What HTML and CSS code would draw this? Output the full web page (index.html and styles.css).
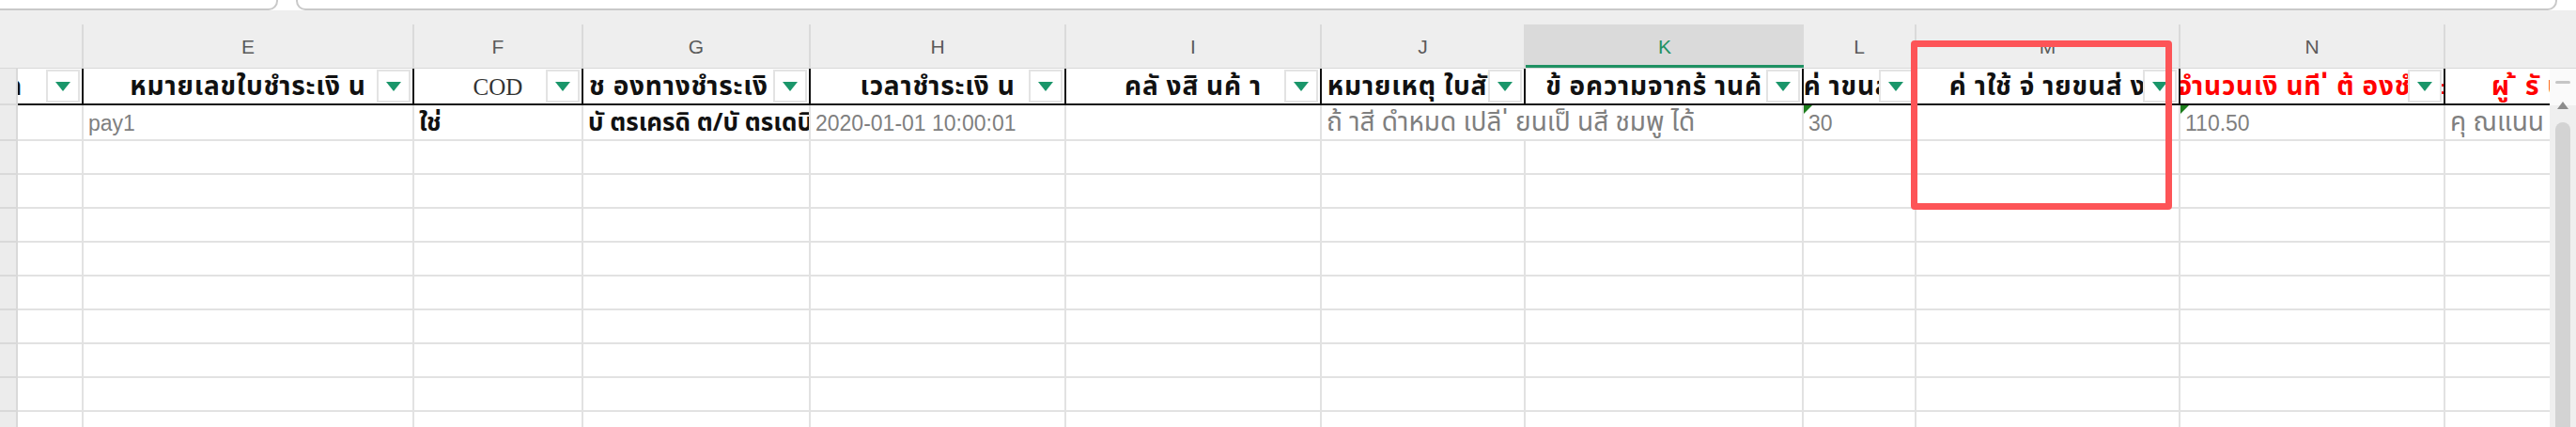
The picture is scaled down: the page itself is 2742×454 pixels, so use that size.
FILE: index.html
```html
<!DOCTYPE html>
<html lang="th">
<head>
<meta charset="utf-8">
<title>Sheet</title>
<link rel="stylesheet" href="styles.css">
</head>
<body>
<div class="topbar">
  <div class="field field-a"></div>
  <div class="field field-b"></div>
</div>

<div class="colbar">
  <div class="lt lt-corner"></div>
  <div class="lt"></div>
  <div class="lt">E</div>
  <div class="lt">F</div>
  <div class="lt">G</div>
  <div class="lt">H</div>
  <div class="lt">I</div>
  <div class="lt">J</div>
  <div class="lt lt-sel">K</div>
  <div class="lt">L</div>
  <div class="lt">M</div>
  <div class="lt">N</div>
  <div class="lt lt-last"></div>
  <div class="lt lt-scroll"></div>
</div>

<div class="body">
  <div class="table">
    <div class="hrow">
      <div class="rh"></div>
      <div class="hc hc-d"><span class="ht">ก</span><span class="dd"></span></div>
      <div class="hc"><span class="ht">หมายเลขใบชำระเงิ น</span><span class="dd"></span></div>
      <div class="hc"><span class="ht ht-serif">COD</span><span class="dd"></span></div>
      <div class="hc hc-left"><span class="ht">ช องทางชำระเงิ น</span><span class="dd"></span></div>
      <div class="hc"><span class="ht">เวลาชำระเงิ น</span><span class="dd"></span></div>
      <div class="hc"><span class="ht">คลั งสิ นค้ า</span><span class="dd"></span></div>
      <div class="hc"><span class="ht">หมายเหตุ ใบสั ่ ง</span><span class="dd"></span></div>
      <div class="hc"><span class="ht">ข้ อความจากร้ านค้ า</span><span class="dd"></span></div>
      <div class="hc"><span class="ht">ค่ าขนส่ ง</span><span class="dd"></span></div>
      <div class="hc"><span class="ht">ค่ าใช้ จ่ ายขนส่ ง</span><span class="dd"></span></div>
      <div class="hc hc-red"><span class="ht">จำนวนเงิ นที ่ ต้ องชำระ</span><span class="dd"></span></div>
      <div class="hc hc-red hc-o"><span class="ht">ผู ้ รั บ</span></div>
    </div>

    <div class="row row-first">
      <div class="rh"></div>
      <div class="c"></div>
      <div class="c">pay1</div>
      <div class="c c-th c-bold">ใช่</div>
      <div class="c c-th c-bold">บั ตรเครดิ ต/บั ตรเดบิ ต</div>
      <div class="c">2020-01-01 10:00:01</div>
      <div class="c"></div>
      <div class="c c-th c-span2">ถ้ าสี ดำหมด เปลี ่ ยนเป็ นสี ชมพู ได้</div>
      <div class="c c-flag">30</div>
      <div class="c"></div>
      <div class="c c-flag">110.50</div>
      <div class="c c-th c-last">คุ ณแนน</div>
    </div>

    <div class="row"><div class="rh"></div><div class="c"></div><div class="c"></div><div class="c"></div><div class="c"></div><div class="c"></div><div class="c"></div><div class="c"></div><div class="c"></div><div class="c"></div><div class="c"></div><div class="c"></div><div class="c c-last"></div></div>
    <div class="row"><div class="rh"></div><div class="c"></div><div class="c"></div><div class="c"></div><div class="c"></div><div class="c"></div><div class="c"></div><div class="c"></div><div class="c"></div><div class="c"></div><div class="c"></div><div class="c"></div><div class="c c-last"></div></div>
    <div class="row"><div class="rh"></div><div class="c"></div><div class="c"></div><div class="c"></div><div class="c"></div><div class="c"></div><div class="c"></div><div class="c"></div><div class="c"></div><div class="c"></div><div class="c"></div><div class="c"></div><div class="c c-last"></div></div>
    <div class="row"><div class="rh"></div><div class="c"></div><div class="c"></div><div class="c"></div><div class="c"></div><div class="c"></div><div class="c"></div><div class="c"></div><div class="c"></div><div class="c"></div><div class="c"></div><div class="c"></div><div class="c c-last"></div></div>
    <div class="row"><div class="rh"></div><div class="c"></div><div class="c"></div><div class="c"></div><div class="c"></div><div class="c"></div><div class="c"></div><div class="c"></div><div class="c"></div><div class="c"></div><div class="c"></div><div class="c"></div><div class="c c-last"></div></div>
    <div class="row"><div class="rh"></div><div class="c"></div><div class="c"></div><div class="c"></div><div class="c"></div><div class="c"></div><div class="c"></div><div class="c"></div><div class="c"></div><div class="c"></div><div class="c"></div><div class="c"></div><div class="c c-last"></div></div>
    <div class="row"><div class="rh"></div><div class="c"></div><div class="c"></div><div class="c"></div><div class="c"></div><div class="c"></div><div class="c"></div><div class="c"></div><div class="c"></div><div class="c"></div><div class="c"></div><div class="c"></div><div class="c c-last"></div></div>
    <div class="row"><div class="rh"></div><div class="c"></div><div class="c"></div><div class="c"></div><div class="c"></div><div class="c"></div><div class="c"></div><div class="c"></div><div class="c"></div><div class="c"></div><div class="c"></div><div class="c"></div><div class="c c-last"></div></div>
    <div class="row"><div class="rh"></div><div class="c"></div><div class="c"></div><div class="c"></div><div class="c"></div><div class="c"></div><div class="c"></div><div class="c"></div><div class="c"></div><div class="c"></div><div class="c"></div><div class="c"></div><div class="c c-last"></div></div>
  </div>

  <div class="vscroll">
    <div class="vs-top"><span class="grip"></span></div>
    <div class="vs-track">
      <span class="vs-arrow"></span>
      <span class="vs-thumb"></span>
    </div>
  </div>
</div>

<div class="callout"></div>
</body>
</html>
```

FILE: styles.css
```css
* { box-sizing: border-box; }

html, body {
  margin: 0;
  padding: 0;
}

body {
  width: 2742px;
  height: 454px;
  overflow: hidden;
  position: relative;
  background: #eeeeee;
  font-family: "Liberation Sans", Arial, "Noto Sans Thai", "Noto Sans Thai Looped", Tahoma, Loma, Garuda, sans-serif;
}

/* ---------- top input strip ---------- */
.topbar {
  height: 11px;
  display: flex;
  gap: 19px;
  background: #ffffff;
}

.field {
  height: 11px;
  background: #ffffff;
  border: 2px solid #c9c9c9;
  border-top: none;
  border-radius: 0 0 10px 10px;
}

.field-a {
  width: 316px;
  margin-left: -20px;
  flex: none;
}

.field-b {
  flex: 1;
  margin-right: 20px;
}

/* ---------- column letters ---------- */
.colbar {
  display: grid;
  grid-template-columns: 19px 70px 352px 180px 242px 272px 272px 217px 296px 120px 281px 282px 111px 28px;
  padding-top: 15px;
  height: 62px;
  border-bottom: 1px solid #d8d8d8;
  background: #eeeeee;
}

.lt {
  display: flex;
  align-items: center;
  justify-content: center;
  border-right: 2px solid #dadada;
  font-size: 21px;
  color: #5a5a5a;
  padding-top: 2px;
}

.lt-corner, .lt-last, .lt-scroll { border-right: none; }

.lt-sel {
  background: #dadada;
  color: #1f9163;
  border-bottom: 3px solid #1f9163;
  border-right: none;
  padding-top: 5px;
}

/* ---------- body ---------- */
.body {
  display: flex;
  height: 381px;
}

.table {
  width: 2714px;
  flex: none;
  overflow: hidden;
  background: #ffffff;
}

.hrow, .row {
  display: grid;
  grid-template-columns: 19px 70px 352px 180px 242px 272px 272px 217px 296px 120px 281px 282px 111px;
}

/* header (filter) row */
.hrow { height: 39px; }

.rh {
  background: #ececec;
  border-right: 2px solid #d9d9d9;
  border-bottom: 2px solid #d9d9d9;
}

.hc {
  position: relative;
  display: flex;
  align-items: center;
  justify-content: center;
  overflow: hidden;
  white-space: nowrap;
  background: #ffffff;
  border-right: 2px solid #111111;
  border-bottom: 2px solid #111111;
  font-family: "Noto Sans Thai", "Noto Sans Thai Looped", Tahoma, Loma, Garuda, "Liberation Sans", sans-serif;
  font-weight: bold;
  font-size: 28px;
  line-height: 1.2;
  letter-spacing: 0.8px;
  color: #111111;
  padding-top: 2px;
}

.hc-d {
  justify-content: flex-end;
  padding-right: 63px;
}

.hc-left {
  justify-content: flex-start;
  padding-left: 6px;
}

.hc-red { color: #ff0000; }

.hc-o {
  border-right: none;
  justify-content: flex-start;
  padding-left: 49px;
}

.ht { flex: none; }

.ht-serif {
  font-family: "Liberation Serif", "Times New Roman", serif;
  font-weight: normal;
  font-size: 25px;
  letter-spacing: 0;
  color: #333333;
}

.dd {
  position: absolute;
  right: 2px;
  top: 1px;
  width: 36px;
  height: 35px;
  background: #ffffff;
  border: 2px solid #e3e3e3;
  display: flex;
  align-items: center;
  justify-content: center;
}

.dd::after {
  content: "";
  width: 0;
  height: 0;
  border-left: 8px solid transparent;
  border-right: 8px solid transparent;
  border-top: 10px solid #1a966a;
}

/* data rows */
.row { height: 36px; }
.row-first { height: 38px; }

.c {
  position: relative;
  display: flex;
  align-items: center;
  padding: 3px 4px 0 5px;
  overflow: hidden;
  white-space: nowrap;
  border-right: 2px solid #e2e2e2;
  border-bottom: 2px solid #e2e2e2;
  font-size: 23px;
  line-height: 1.2;
  color: #7f7f7f;
}

.c-th {
  font-family: "Noto Sans Thai", "Noto Sans Thai Looped", Tahoma, Loma, Garuda, "Liberation Sans", sans-serif;
  font-size: 28px;
  line-height: 1.1;
}

.c-bold {
  font-weight: bold;
  color: #111111;
  font-size: 26px;
}

.c-span2 { grid-column: span 2; }

.c-last { border-right: none; }

.c-flag::before {
  content: "";
  position: absolute;
  left: 0;
  top: 0;
  width: 0;
  height: 0;
  border-top: 9px solid #1b7d1b;
  border-right: 9px solid transparent;
}

/* ---------- vertical scrollbar ---------- */
.vscroll {
  width: 28px;
  flex: none;
  display: flex;
  flex-direction: column;
  background: #efefef;
}

.vs-top {
  height: 39px;
  background: #fafafa;
  display: flex;
  justify-content: center;
  padding-top: 13px;
}

.grip {
  width: 16px;
  height: 3px;
  border-radius: 2px;
  background: #c6c6c6;
}

.vs-track {
  flex: 1;
  display: flex;
  flex-direction: column;
  align-items: center;
}

.vs-arrow {
  width: 0;
  height: 0;
  margin-top: -4px;
  border-left: 6px solid transparent;
  border-right: 6px solid transparent;
  border-bottom: 8px solid #8c8c8c;
}

.vs-thumb {
  margin-top: 14px;
  width: 16px;
  flex: 1;
  border-radius: 8px 8px 0 0;
  background: #d3d3d3;
}

/* ---------- annotation ---------- */
.callout {
  position: absolute;
  left: 2034px;
  top: 43px;
  width: 278px;
  height: 180px;
  border: 7px solid #fd5457;
  border-radius: 4px;
  pointer-events: none;
}
```
